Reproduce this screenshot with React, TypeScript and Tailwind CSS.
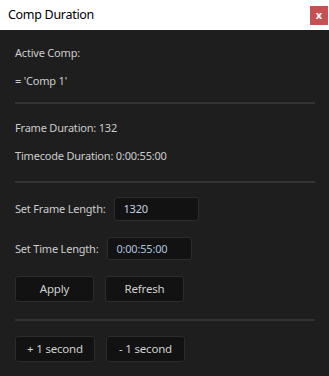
import React from "react";

const font = { fontFamily: '"Noto Sans", "Open Sans", sans-serif' };

function Divider({ className = "" }: { className?: string }) {
  return <div className={`h-[2px] w-[300px] bg-[#333333] ${className}`} />;
}

function Btn({ label, w }: { label: string; w: string }) {
  return (
    <button
      className={`${w} h-[26px] rounded-[3px] border border-[#2c2c2c] bg-[#121212] text-[11.5px] tracking-[-0.2px] text-[#cfcfcf] flex items-center justify-center`}
    >
      {label}
    </button>
  );
}

export default function App() {
  return (
    <div className="w-[329px] h-[376px] flex flex-col bg-[#1e1e1e]" style={font}>
      {/* title bar */}
      <div className="h-[30px] bg-white flex items-center justify-between pl-[8px] pr-[1px]">
        <span className="text-[12.5px] tracking-[-0.3px] text-black">Comp Duration</span>
        <div className="w-[18px] h-[19px] bg-[#c75050] text-white text-[11px] font-bold flex items-center justify-center leading-none pb-[2px]">
          x
        </div>
      </div>

      <div className="flex-1 px-[15px] text-[11px] tracking-[-0.2px] text-[#cccccc] leading-[16px]">
        <div className="mt-[15px]">Active Comp:</div>
        <div className="mt-[12px]">= 'Comp 1'</div>
        <Divider className="mt-[13px]" />

        <div className="mt-[16px]">Frame Duration: 132</div>
        <div className="mt-[12px]">Timecode Duration: 0:00:55:00</div>
        <Divider className="mt-[17px]" />

        <div className="mt-[14px] flex items-center gap-[9px]">
          <span>Set Frame Length:</span>
          <div className="w-[85px] h-[24px] rounded-[3px] border border-[#2c2c2c] bg-[#121212] flex items-center px-[8px] text-[#c4d2e4]">
            1320
          </div>
        </div>
        <div className="mt-[16px] flex items-center gap-[9px]">
          <span>Set Time Length:</span>
          <div className="w-[85px] h-[23px] rounded-[3px] border border-[#2c2c2c] bg-[#121212] flex items-center px-[8px] text-[#a9c1de]">
            0:00:55:00
          </div>
        </div>

        <div className="mt-[16px] flex gap-[11px]">
          <Btn label="Apply" w="w-[79px]" />
          <Btn label="Refresh" w="w-[79px]" />
        </div>
        <Divider className="mt-[17px]" />

        <div className="mt-[15px] flex gap-[11px]">
          <Btn label="+ 1 second" w="w-[80px]" />
          <Btn label="- 1 second" w="w-[79px]" />
        </div>
      </div>
    </div>
  );
}
